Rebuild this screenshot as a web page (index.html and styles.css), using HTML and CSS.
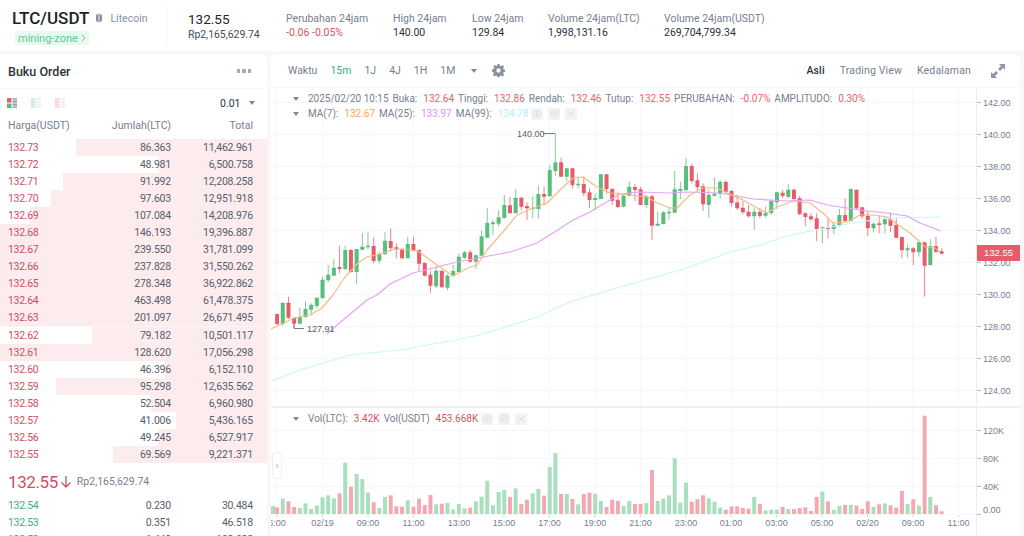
FILE: index.html
```html
<!DOCTYPE html>
<html>
<head lang="en">
	<meta charset="UTF-8">
	<title>LTC/USDT</title>
	<link rel="stylesheet" href="styles.css">
</head>
<body>
	<div class="header">
		<div class="pair">
			<div class="pair-top">
				<span class="pair-name">LTC/USDT</span>
				<svg class="pair-icon" width="8" height="10" viewBox="0 0 8 10"><path d="M1 2l3-1.500L7 2v6L4 9.500 1 8z" fill="#8a929e"/><path d="M4 1v8" stroke="#fff" stroke-width=".8"/></svg>
				<span class="pair-coin">Litecoin</span>
			</div>
			<a class="tag">mining-zone <svg width="5" height="8" viewBox="0 0 5 8"><path d="M1 1l3 3-3 3" fill="none" stroke="#5ccb90"/></svg></a>
		</div>
		<div class="last">
			<div class="last-price">132.55</div>
			<div class="last-rp">Rp2,165,629.74</div>
		</div>
		<div class="stat s-change"><div class="label">Perubahan 24jam</div><div class="value red">-0.06 -0.05%</div></div>
		<div class="stat s-high"><div class="label">High 24jam</div><div class="value">140.00</div></div>
		<div class="stat s-low"><div class="label">Low 24jam</div><div class="value">129.84</div></div>
		<div class="stat s-vol"><div class="label">Volume 24jam(LTC)</div><div class="value">1,998,131.16</div></div>
		<div class="stat"><div class="label">Volume 24jam(USDT)</div><div class="value">269,704,799.34</div></div>
	</div>

	<div class="main">
		<div class="book">
			<div class="book-title">
				<span>Buku Order</span>
				<span class="dots"><i></i><i></i><i></i></span>
			</div>
			<div class="book-tools">
				<svg width="10" height="10" viewBox="0 0 10 10"><rect width="4.500" height="4.500" fill="#e5606f"/><rect y="5.500" width="4.500" height="4.500" fill="#58bd7d"/><rect x="5.500" width="4.500" height="2" fill="#b0b5bd"/><rect x="5.500" y="2.600" width="4.500" height="2" fill="#8f96a1"/><rect x="5.500" y="5.500" width="4.500" height="2" fill="#8f96a1"/><rect x="5.500" y="8.100" width="4.500" height="1.900" fill="#b0b5bd"/></svg>
				<svg width="10" height="10" viewBox="0 0 10 10"><rect width="4.500" height="10" fill="#d3eedd"/><rect x="5.500" width="4.500" height="2" fill="#eceef0"/><rect x="5.500" y="2.600" width="4.500" height="2" fill="#eceef0"/><rect x="5.500" y="5.500" width="4.500" height="2" fill="#eceef0"/><rect x="5.500" y="8.100" width="4.500" height="1.900" fill="#eceef0"/></svg>
				<svg width="10" height="10" viewBox="0 0 10 10"><rect width="4.500" height="10" fill="#fbd9dd"/><rect x="5.500" width="4.500" height="2" fill="#eceef0"/><rect x="5.500" y="2.600" width="4.500" height="2" fill="#eceef0"/><rect x="5.500" y="5.500" width="4.500" height="2" fill="#eceef0"/><rect x="5.500" y="8.100" width="4.500" height="1.900" fill="#eceef0"/></svg>
				<span class="step">0.01</span>
				<span class="caret step-caret"></span>
			</div>
			<div class="row head"><span>Harga(USDT)</span><span>Jumlah(LTC)</span><span>Total</span></div>
			<div class="rows">
				<div class="row ask" style="background-size:71.5% 100%"><span>132.73</span><span>86.363</span><span>11,462.961</span></div>
				<div class="row ask" style="background-size:40.4% 100%"><span>132.72</span><span>48.981</span><span>6,500.758</span></div>
				<div class="row ask" style="background-size:76.4% 100%"><span>132.71</span><span>91.992</span><span>12,208.258</span></div>
				<div class="row ask" style="background-size:80.9% 100%"><span>132.70</span><span>97.603</span><span>12,951.918</span></div>
				<div class="row ask" style="background-size:88.8% 100%"><span>132.69</span><span>107.084</span><span>14,208.976</span></div>
				<div class="row ask" style="background-size:100% 100%"><span>132.68</span><span>146.193</span><span>19,396.887</span></div>
				<div class="row ask" style="background-size:100% 100%"><span>132.67</span><span>239.550</span><span>31,781.099</span></div>
				<div class="row ask" style="background-size:100% 100%"><span>132.66</span><span>237.828</span><span>31,550.262</span></div>
				<div class="row ask" style="background-size:100% 100%"><span>132.65</span><span>278.348</span><span>36,922.862</span></div>
				<div class="row ask" style="background-size:100% 100%"><span>132.64</span><span>463.498</span><span>61,478.375</span></div>
				<div class="row ask" style="background-size:100% 100%"><span>132.63</span><span>201.097</span><span>26,671.495</span></div>
				<div class="row ask" style="background-size:65.5% 100%"><span>132.62</span><span>79.182</span><span>10,501.117</span></div>
				<div class="row ask" style="background-size:100% 100%"><span>132.61</span><span>128.620</span><span>17,056.298</span></div>
				<div class="row ask" style="background-size:38.6% 100%"><span>132.60</span><span>46.396</span><span>6,152.110</span></div>
				<div class="row ask" style="background-size:79% 100%"><span>132.59</span><span>95.298</span><span>12,635.562</span></div>
				<div class="row ask" style="background-size:43.4% 100%"><span>132.58</span><span>52.504</span><span>6,960.980</span></div>
				<div class="row ask" style="background-size:34.1% 100%"><span>132.57</span><span>41.006</span><span>5,436.165</span></div>
				<div class="row ask" style="background-size:40.8% 100%"><span>132.56</span><span>49.245</span><span>6,527.917</span></div>
				<div class="row ask" style="background-size:57.7% 100%"><span>132.55</span><span>69.569</span><span>9,221.371</span></div>
			</div>
			<div class="mid">
				<span class="mid-price">132.55</span>
				<svg width="12" height="14" viewBox="0 0 12 14"><path d="M6 1v11M1.500 7.500L6 12l4.500-4.500" fill="none" stroke="#cf4f5f" stroke-width="1.300"/></svg>
				<span class="mid-rp">Rp2,165,629.74</span>
			</div>
			<div class="row bid"><span>132.54</span><span>0.230</span><span>30.484</span></div>
			<div class="row bid"><span>132.53</span><span>0.351</span><span>46.518</span></div>
			<div class="row bid"><span>132.52</span><span>1.449</span><span>192.022</span></div>
		</div>

		<div class="chart-panel">
			<div class="toolbar">
				<span class="tf">Waktu</span>
				<span class="tf on">15m</span>
				<span class="tf">1J</span>
				<span class="tf">4J</span>
				<span class="tf">1H</span>
				<span class="tf">1M</span>
				<span class="caret tf-caret"></span>
				<svg class="gear" width="13" height="13" viewBox="0 0 24 24"><path fill="#8a919c" fill-rule="evenodd" d="M10 0h4l.7 3.300 2 .8L19.500 2.300l2.800 2.800-1.800 2.800.8 2 3.300.7v4l-3.300.7-.8 2 1.800 2.800-2.800 2.800-2.800-1.800-2 .8-.7 3.300h-4l-.7-3.300-2-.8-2.800 1.800-2.800-2.800 1.800-2.800-.8-2L0 14v-4l3.300-.7.8-2-1.800-2.800 2.800-2.800 2.800 1.800 2-.8zM12 8a4 4 0 1 0 0 8 4 4 0 0 0 0-8z"/></svg>
				<span class="spacer"></span>
				<span class="view on">Asli</span>
				<span class="view">Trading View</span>
				<span class="view">Kedalaman</span>
				<svg class="expand" width="14" height="14" viewBox="0 0 14 14"><path fill="#8f96a1" d="M8 0h6v6l-2-2-3 3-2-2 3-3zM6 14H0V8l2 2 3-3 2 2-3 3z"/></svg>
			</div>
			<div class="chart">
				<svg id="plot" class="plot" viewBox="271 88 749 448" width="749" height="448"></svg>
				<div class="legend">
					<div class="legend-line">
						<span class="caret small"></span>
						<span>2025/02/20 10:15</span>
						<span>Buka: <b>132.64</b></span>
						<span>Tinggi: <b>132.86</b></span>
						<span>Rendah: <b>132.46</b></span>
						<span>Tutup: <b>132.55</b></span>
						<span>PERUBAHAN: <b>-0.07%</b></span>
						<span>AMPLITUDO: <b>0.30%</b></span>
					</div>
					<div class="legend-line">
						<span class="caret small"></span>
						<span>MA(7): <b class="ma7">132.67</b></span>
						<span>MA(25): <b class="ma25">133.97</b></span>
						<span>MA(99): <b class="ma99">134.78</b></span>
						<span class="tools">
							<i><svg width="10" height="8" viewBox="0 0 10 8"><path d="M.5 4C2 1.500 3.500.8 5 .8S8 1.500 9.500 4C8 6.500 6.500 7.200 5 7.200S2 6.500.5 4z" fill="none" stroke="#dcdee1"/><circle cx="5" cy="4" r="1.500" fill="#dcdee1"/></svg></i>
							<i><svg width="9" height="9" viewBox="0 0 9 9"><path d="M4.500.5l3.500 2v4l-3.500 2-3.500-2v-4z" fill="none" stroke="#dcdee1"/><circle cx="4.500" cy="4.500" r="1.300" fill="none" stroke="#dcdee1"/></svg></i>
							<i><svg width="8" height="8" viewBox="0 0 8 8"><path d="M1 1l6 6M7 1L1 7" stroke="#dcdee1"/></svg></i>
						</span>
					</div>
				</div>
				<div class="legend vol-legend">
					<div class="legend-line">
						<span class="caret small"></span>
						<span>Vol(LTC): <b>3.42K</b></span>
						<span>Vol(USDT) <b>453.668K</b></span>
						<span class="tools">
							<i><svg width="10" height="8" viewBox="0 0 10 8"><path d="M.5 4C2 1.500 3.500.8 5 .8S8 1.500 9.500 4C8 6.500 6.500 7.200 5 7.200S2 6.500.5 4z" fill="none" stroke="#dcdee1"/><circle cx="5" cy="4" r="1.500" fill="#dcdee1"/></svg></i>
							<i><svg width="9" height="9" viewBox="0 0 9 9"><path d="M4.500.5l3.500 2v4l-3.500 2-3.500-2v-4z" fill="none" stroke="#dcdee1"/><circle cx="4.500" cy="4.500" r="1.300" fill="none" stroke="#dcdee1"/></svg></i>
							<i><svg width="8" height="8" viewBox="0 0 8 8"><path d="M1 1l6 6M7 1L1 7" stroke="#dcdee1"/></svg></i>
						</span>
					</div>
				</div>
				<div class="handle"><svg width="4" height="6" viewBox="0 0 4 6"><path d="M1 1l2 2-2 2" fill="none" stroke="#b7bcc4"/></svg></div>
				<div class="price-tag">132.55</div>
			</div>
		</div>
	</div>
	<script src="chart.js"></script>
</body>
</html>
```

FILE: styles.css
```css
* {
	margin: 0;
	padding: 0;
	box-sizing: border-box;
}

html, body {
	height: 536px;
	overflow: hidden;
}

body {
	background: #f8f8f9;
	color: #1e2329;
	font-family: Roboto, "Noto Sans", sans-serif;
	font-size: 10.500px;
}

.red {
	color: #d9525f !important;
}

/* top bar */
.header {
	display: flex;
	height: 51px;
	background: #fff;
	padding-top: 5px;
}

.pair {
	width: 167px;
	height: 41px;
	padding-left: 12px;
	border-right: 1px solid #f4f4f5;
}

.pair-top {
	display: flex;
	align-items: center;
	height: 26px;
}

.pair-name {
	font-size: 17px;
	font-weight: 500;
}

.pair-icon {
	margin-left: 6px;
}

.pair-coin {
	margin-left: 7px;
	color: #8a929e;
}

.tag {
	display: inline-flex;
	align-items: center;
	gap: 3px;
	height: 14px;
	margin-left: 3px;
	padding: 0 3px;
	background: #e9f9ef;
	color: #5ccb90;
	font-size: 11px;
	border-radius: 2px;
}

.last {
	width: 98px;
	margin-left: 21px;
	padding-top: 7px;
}

.last-price {
	font-size: 13.500px;
	line-height: 15px;
	color: #1e2329;
}

.last-rp {
	margin-top: 1px;
	line-height: 13px;
	color: #444c58;
	letter-spacing: -.05px;
}

.stat {
	padding-top: 7px;
	line-height: 14px;
}

.s-change { width: 107px; }
.s-high { width: 79px; }
.s-low { width: 76px; }
.s-vol { width: 116px; }

.label {
	color: #76808f;
}

.value {
	color: #2b3139;
	letter-spacing: 0;
}

/* layout */
.main {
	display: flex;
	gap: 4px;
	height: 485px;
	padding-top: 3px;
}

/* order book */
.book {
	width: 267px;
	height: 482px;
	overflow: hidden;
	background: #fff;
	border-radius: 0 6px 0 0;
}

.book-title {
	display: flex;
	justify-content: space-between;
	align-items: center;
	height: 35px;
	padding: 0 16px 0 8px;
	border-bottom: 1px solid #f6f6f7;
	font-size: 12.500px;
	font-weight: 500;
	color: #2b3139;
}

.dots {
	display: flex;
	gap: 2px;
}

.dots i {
	width: 3.500px;
	height: 3.500px;
	background: #a5abb5;
}

.book-tools {
	display: flex;
	align-items: center;
	height: 28px;
	padding-left: 7px;
	gap: 14px;
}

.step {
	margin-left: 141px;
	color: #2b3139;
}

.caret {
	width: 0;
	height: 0;
	border: 3.500px solid transparent;
	border-top: 4px solid #7f8794;
	border-bottom: 0;
}

.step-caret {
	margin-left: -5px;
}

.row {
	display: grid;
	grid-template-columns: 90px 73px 82px;
	padding: 0 14px 0 8px;
	height: 17px;
	line-height: 17px;
	letter-spacing: -.2px;
	color: #565e6b;
}

.row span + span {
	text-align: right;
}

.row span:first-child {
	letter-spacing: -.3px;
}

.head {
	height: 22px;
	line-height: 18px;
	color: #76808f;
	letter-spacing: 0;
}

.head span:first-child {
	letter-spacing: 0;
}

.ask {
	height: 17.060px;
	background: linear-gradient(#fcecee, #fcecee) right / 0 100% no-repeat;
}

.ask span:first-child {
	color: #cf4f5f;
}

.bid span:first-child {
	color: #3fae7a;
}

.mid {
	display: flex;
	align-items: center;
	height: 33px;
	padding: 3px 0 0 8px;
	margin-top: 1px;
}

.mid-price {
	font-size: 17px;
	letter-spacing: -.4px;
	color: #cf4f5f;
	margin-right: 2px;
}

.mid-rp {
	margin-left: 5px;
	color: #76808f;
}

/* chart */
.chart-panel {
	width: 749px;
	height: 482px;
	background: #fff;
	border-radius: 6px 6px 0 0;
}

.toolbar {
	display: flex;
	align-items: center;
	height: 34px;
	padding-left: 17px;
	color: #76808f;
	border-bottom: 1px solid #f6f6f7;
}

.tf {
	margin-right: 13px;
}

.tf.on {
	color: #3fae7a;
}

.tf-caret {
	margin-left: 3px;
	margin-right: 15px;
}

.spacer {
	flex: 1;
}

.view {
	margin-right: 15px;
	letter-spacing: .15px;
}

.view.on {
	color: #2b3139;
	font-weight: 500;
}

.expand {
	margin: 0 15px 0 5px;
}

.chart {
	position: relative;
	height: 448px;
	overflow: hidden;
}

.plot {
	display: block;
}

.plot text {
	font-family: "Liberation Sans", Arial, sans-serif;
	font-size: 9px;
	fill: #76808f;
}

.plot .mark {
	fill: #565e6b;
}

.legend {
	position: absolute;
	top: 3px;
	left: 22px;
	color: #76808f;
}

.vol-legend {
	top: 323px;
}

.legend-line {
	display: flex;
	align-items: center;
	gap: 4px;
	height: 15px;
	white-space: nowrap;
	font-size: 10px;
}

.legend-line .small {
	margin-right: 5px;
}

.legend b {
	margin-left: 3.500px;
	font-weight: 400;
	color: #ec5f6e;
}

.vol-legend b {
	color: #d9525f;
}

.legend .ma7 { color: #f4a662; }
.legend .ma25 { color: #e58ef5; }
.legend .ma99 { color: #b4f2f7; }

.tools {
	display: flex;
	gap: 5px;
	margin-left: -1px;
}

.tools i {
	display: flex;
	align-items: center;
	justify-content: center;
	width: 12px;
	height: 12px;
	background: #f2f3f4;
}

.handle {
	position: absolute;
	left: 1px;
	top: 364px;
	width: 10px;
	height: 27px;
	display: flex;
	align-items: center;
	justify-content: center;
	background: #fff;
	border: 1px solid #f0f1f2;
	border-radius: 3px;
}

.price-tag {
	position: absolute;
	left: 706px;
	top: 157px;
	width: 43px;
	height: 16px;
	line-height: 16px;
	text-align: center;
	background: #e75c6a;
	color: #fff;
	font-family: "Liberation Sans", Arial, sans-serif;
	font-size: 9.500px;
}
```

FILE: chart.js
```js
// candles measured off the chart, in page pixels x3: wick top, wick bottom, body top, body bottom, colour
var candles = [
	[565,600,567,597,'r'],[533,602,533,597,'g'],[515,582,533,578,'r'],[577,610,578,596,'r'],[548,597,576,596,'g'],
	[528,577,552,577,'g'],[535,570,539,554,'g'],[518,550,518,543,'g'],[455,520,464,520,'g'],[420,472,449,466,'g'],
	[402,452,428,452,'g'],[362,445,426,432,'r'],[362,435,375,432,'g'],[372,443,375,441,'r'],[372,478,372,441,'g'],
	[324,376,365,374,'g'],[322,372,362,367,'g'],[337,415,363,408,'r'],[380,415,388,407,'g'],[322,388,347,388,'g'],
	[310,380,348,370,'r'],[355,400,367,373,'r'],[370,402,371,400,'r'],[335,400,357,400,'g'],[335,380,357,375,'r'],
	[373,440,375,416,'r'],[412,455,414,452,'r'],[437,503,449,482,'r'],[425,490,437,484,'g'],[437,488,437,487,'r'],
	[447,496,452,488,'g'],[420,455,438,453,'g'],[385,442,395,441,'g'],[378,402,382,398,'g'],[375,412,382,410,'r'],
	[388,432,391,410,'g'],[317,392,334,392,'g'],[250,338,294,338,'g'],[285,330,292,298,'g'],[255,305,277,296,'g'],
	[210,280,240,279,'g'],[215,265,241,265,'r'],[192,265,218,265,'g'],[215,255,218,245,'r'],[232,285,243,250,'r'],
	[215,280,248,252,'g'],[183,282,207,252,'g'],[185,240,207,215,'r'],[120,215,135,214,'g'],[25,152,112,138,'g'],
	[98,155,112,155,'r'],[130,170,130,155,'g'],[130,190,130,180,'r'],[155,190,176,181,'g'],[155,215,177,205,'r'],
	[190,250,202,225,'r'],[205,255,219,225,'g'],[148,222,148,222,'g'],[148,205,148,192,'r'],[190,240,192,227,'r'],
	[200,250,224,246,'r'],
	[205,247,212,245,'g'],[168,215,185,212,'g'],[177,228,186,195,'r'],[185,240,193,240,'r'],[210,250,214,240,'g'],
	[210,345,214,302,'r'],[260,302,296,302,'g'],[258,298,262,297,'g'],[245,285,260,265,'g'],[138,265,193,263,'g'],
	[170,222,192,198,'g'],[100,198,123,195,'g'],[115,175,123,168,'r'],[145,198,166,187,'r'],[175,258,184,238,'r'],
	[195,278,209,240,'g'],[158,215,206,212,'g'],[165,220,170,207,'g'],[167,205,170,200,'r'],[195,245,198,234,'r'],
	[210,255,232,250,'r'],[228,268,248,262,'r'],[240,278,260,274,'r'],[250,315,260,274,'g'],[248,280,260,273,'r'],
	[245,278,264,272,'g'],[225,270,228,264,'g'],[200,252,202,232,'g'],[195,220,203,213,'r'],[178,218,194,216,'g'],
	[190,225,194,222,'r'],[213,270,220,268,'r'],[262,303,265,276,'r'],[265,288,274,283,'r'],[265,348,280,312,'r'],
	[305,355,307,312,'g'],[280,340,307,312,'r'],[292,328,301,312,'g'],[252,305,270,302,'g'],[220,290,270,288,'r'],
	[190,290,192,288,'g'],[194,255,194,250,'r'],[247,282,247,274,'r'],[258,333,272,310,'r'],[292,322,296,310,'g'],
	[272,325,295,300,'r'],[272,325,283,298,'g'],[262,322,283,302,'r'],[280,340,300,338,'r'],[335,400,336,376,'r'],
	[358,398,370,376,'g'],[366,420,370,382,'r'],[350,395,352,382,'g'],[352,515,352,422,'r'],[342,422,363,420,'g'],
	[335,385,363,380,'r'],[370,388,379,386,'r']
];

// volume bar tops, same x3 scale, from 400px; base is at 342
var volumes = [
	322,296,304,321,324,310,327,317,292,286,295,280,188,260,222,237,278,307,324,291,
	286,319,320,301,320,296,315,285,313,311,309,328,312,325,323,304,290,242,316,276,
	270,291,265,312,299,280,267,287,201,159,282,282,297,313,282,278,281,303,321,299,
	303,318,303,312,312,309,210,303,296,286,175,308,248,305,298,286,295,305,323,329,
	319,319,324,326,291,312,331,329,329,321,327,327,324,322,333,291,275,304,329,318,
	315,315,317,327,304,321,313,310,316,323,273,312,298,317,47,291,316,334
];

var ma7 = [[271,329],[277,326],[294,318],[310,315],[322,308],[333,295],[345,277],[358,263],[367,257],[380,254],[395,249],[410,250],[418,251],[430,260],[440,267],[453,276],[470,267],[477,265],[487,250],[503,232],[517,215],[533,208],[547,203],[560,190],[573,178],[583,177],[597,187],[610,193],[620,194],[630,195],[647,197],[657,203],[670,208],[677,208],[690,195],[703,188],[717,188],[727,193],[743,200],[757,208],[767,213],[777,207],[793,201],[810,203],[823,213],[833,223],[847,222],[860,215],[873,215],[887,217],[897,224],[910,233],[920,242],[925,247],[935,248],[940,252]];
var ma25 = [[327,334],[337,325],[367,300],[377,295],[390,284],[413,273],[437,267],[457,262],[483,257],[510,252],[537,243],[553,233],[573,220],[590,212],[610,200],[620,194],[640,192],[670,193],[687,192],[720,193],[753,199],[787,201],[810,200],[827,205],[847,208],[867,211],[887,213],[907,216],[920,223],[941,231]];
var ma99 = [[272,381],[300,370],[350,355],[400,350],[450,341],[480,335],[537,317],[570,302],[620,287],[663,275],[687,268],[703,262],[730,252],[760,245],[787,236],[820,229],[853,223],[887,218],[941,217]];

var priceTicks = [[102,'142.00'],[134,'140.00'],[166,'138.00'],[198,'136.00'],[230,'134.00'],[262,'132.00'],[294,'130.00'],[326,'128.00'],[358,'126.00'],[390,'124.00']];
var volTicks = [[430,'120K'],[458,'80K'],[486,'40K'],[514,'0.00']];
var timeTicks = [[277,'5:00'],[322.500,'02/19'],[368,'09:00'],[413.500,'11:00'],[459,'13:00'],[504,'15:00'],[549.500,'17:00'],[595,'19:00'],[640.500,'21:00'],[686,'23:00'],[731,'01:00'],[776.500,'03:00'],[822,'05:00'],[867.500,'02/20'],[913,'09:00'],[958.500,'11:00']];

var GREEN = '#58bd7d', RED = '#e75c6a';
var plot = document.getElementById('plot');
var ns = 'http://www.w3.org/2000/svg';

function add(tag, attrs, text) {
	var el = document.createElementNS(ns, tag);
	for (var k in attrs) {
		el.setAttribute(k, attrs[k]);
	}
	if (text) {
		el.textContent = text;
	}
	plot.appendChild(el);
	return el;
}

function line(x1, y1, x2, y2, color, w) {
	return add('line', {x1: x1, y1: y1, x2: x2, y2: y2, stroke: color, 'stroke-width': w || 1});
}

function curve(points, color) {
	var s = points.map(function(p) { return p.join(','); }).join(' ');
	add('polyline', {points: s, fill: 'none', stroke: color, 'stroke-width': 1.2, 'stroke-linejoin': 'round'});
}

function candleX(i) {
	return 277.1 + i * 5.68;
}

function candleY(v) {
	return 125 + v / 3;
}

// grid
timeTicks.forEach(function(t) {
	line(t[0], 88, t[0], 514, '#f7f7f8');
	line(t[0], 514, t[0], 517, '#c9cdd2');
	add('text', {x: t[0], y: 526, 'text-anchor': 'middle'}, t[1]);
});
priceTicks.forEach(function(t) {
	line(271, t[0] + .5, 976, t[0] + .5, '#f7f7f8');
	line(977, t[0] + .5, 981, t[0] + .5, '#b7bcc4');
	add('text', {x: 983, y: t[0] + 3.5}, t[1]);
});
volTicks.forEach(function(t) {
	line(271, t[0] + .5, 976, t[0] + .5, '#f7f7f8');
	line(977, t[0] + .5, 981, t[0] + .5, '#b7bcc4');
	add('text', {x: 983, y: t[0] + (t[1] == '0.00' ? -1 : 3.5)}, t[1]);
});
line(976.500, 88, 976.500, 536, '#ededef');
add('rect', {x: 271, y: 406, width: 749, height: 2, fill: '#f1f1f2'});

// candles
candles.forEach(function(c, i) {
	var x = candleX(i), color = c[4] == 'g' ? GREEN : RED;
	line(x, candleY(c[0]), x, candleY(c[1]), color, 1).setAttribute('opacity', .75);
	add('rect', {x: x - 2, y: candleY(c[2]), width: 4, height: Math.max((c[3] - c[2]) / 3, 1), fill: color, rx: .5});
});

curve(ma99, '#c9f6fa');
curve(ma25, '#e8a1f5');
curve(ma7, '#f4bb88');

// highest and lowest marks
line(543, 133.500, 555, 133.500, '#76808f');
add('text', {x: 517, y: 136.500, 'class': 'mark'}, '140.00');
line(294, 328.500, 304, 328.500, '#76808f');
line(294, 324, 294, 328.500, '#76808f');
add('text', {x: 307, y: 331.500, 'class': 'mark'}, '127.91');

// volume
add('rect', {x: 271, y: 506, width: 4, height: 8, fill: '#a9dfbe'});
volumes.forEach(function(v, i) {
	var top = 400 + v / 3;
	add('rect', {x: candleX(i) - 2, y: top, width: 4, height: 514 - top, fill: candles[i][4] == 'g' ? '#a9dfbe' : '#f4a8b1'});
});
```
